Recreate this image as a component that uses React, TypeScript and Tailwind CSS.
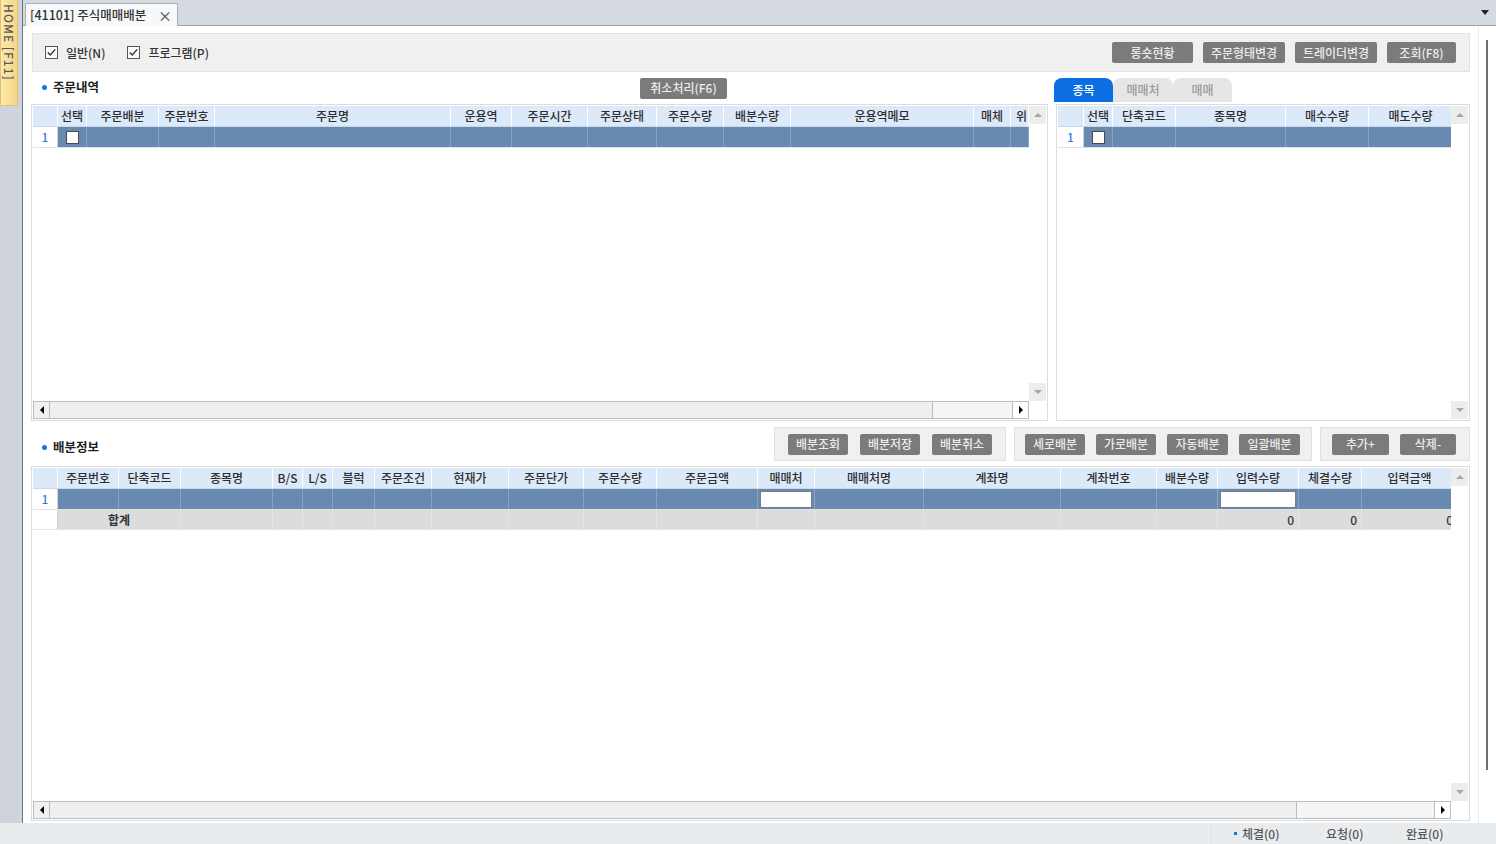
import React from 'react';

type Col = { w: string; label: string; kind?: 'check' | 'input'; left?: boolean };

const leftCols: Col[] = [
  { w: 'w-[29px]', label: '선택', kind: 'check' },
  { w: 'w-[72px]', label: '주문배분' },
  { w: 'w-[56px]', label: '주문번호' },
  { w: 'w-[236px]', label: '주문명' },
  { w: 'w-[61px]', label: '운용역' },
  { w: 'w-[76px]', label: '주문시간' },
  { w: 'w-[69px]', label: '주문상태' },
  { w: 'w-[67px]', label: '주문수량' },
  { w: 'w-[67px]', label: '배분수량' },
  { w: 'w-[183px]', label: '운용역메모' },
  { w: 'w-[37px]', label: '매체' },
  { w: 'w-[18px]', label: '위', left: true },
];

const rightCols: Col[] = [
  { w: 'w-[29px]', label: '선택', kind: 'check' },
  { w: 'w-[63px]', label: '단축코드' },
  { w: 'w-[110px]', label: '종목명' },
  { w: 'w-[83px]', label: '매수수량' },
  { w: 'w-[84px]', label: '매도수량' },
];

const bottomCols: Col[] = [
  { w: 'w-[61px]', label: '주문번호' },
  { w: 'w-[62px]', label: '단축코드' },
  { w: 'w-[92px]', label: '종목명' },
  { w: 'w-[30px]', label: 'B/S' },
  { w: 'w-[30px]', label: 'L/S' },
  { w: 'w-[42px]', label: '블럭' },
  { w: 'w-[57px]', label: '주문조건' },
  { w: 'w-[77px]', label: '현재가' },
  { w: 'w-[75px]', label: '주문단가' },
  { w: 'w-[73px]', label: '주문수량' },
  { w: 'w-[101px]', label: '주문금액' },
  { w: 'w-[57px]', label: '매매처', kind: 'input' },
  { w: 'w-[109px]', label: '매매처명' },
  { w: 'w-[137px]', label: '계좌명' },
  { w: 'w-[96px]', label: '계좌번호' },
  { w: 'w-[61px]', label: '배분수량' },
  { w: 'w-[81px]', label: '입력수량', kind: 'input' },
  { w: 'w-[63px]', label: '체결수량' },
  { w: 'w-[96px]', label: '입력금액' },
];

const zeroCols = ['입력수량', '체결수량', '입력금액'];

function Btn({ w, children }: { w: string; children: React.ReactNode }) {
  return (
    <div className={`${w} h-[21px] shrink-0 rounded-[2px] bg-[#7b7b7b] text-[#ececec] text-[12px] flex items-center justify-center whitespace-nowrap`}>
      {children}
    </div>
  );
}

function CheckBox() {
  return (
    <svg width="13" height="13" viewBox="0 0 13 13" className="shrink-0">
      <rect x="0.5" y="0.5" width="12" height="12" fill="#fafafa" stroke="#555" />
      <path d="M2.8 6.4 L5.3 9 L10.2 3.4" stroke="#333" strokeWidth="1.4" fill="none" />
    </svg>
  );
}

function Title({ children }: { children: React.ReactNode }) {
  return (
    <div className="flex items-center pl-[11px] gap-[6px]">
      <div className="w-[5px] h-[5px] rounded-full bg-[#1a72e6]" />
      <span className="text-[12.5px] font-bold text-[#222]">{children}</span>
    </div>
  );
}

function VScroll() {
  return (
    <div className="w-[17px] shrink-0 flex flex-col bg-white">
      <div className="h-[18px] bg-[#ededed] flex items-center justify-center">
        <div className="w-0 h-0 border-x-[4px] border-x-transparent border-b-[4px] border-b-[#a6a6a6]" />
      </div>
      <div className="flex-1" />
      <div className="h-[18px] bg-[#ededed] flex items-center justify-center">
        <div className="w-0 h-0 border-x-[4px] border-x-transparent border-t-[4px] border-t-[#a6a6a6]" />
      </div>
    </div>
  );
}

function HScroll({ thumb }: { thumb: string }) {
  return (
    <div className="h-[18px] shrink-0 flex">
      <div className="flex-1 flex border border-[#bdbdbd] bg-[#f5f5f5]">
        <div className="w-[16px] shrink-0 border-r border-[#bdbdbd] bg-[#f0f0f0] flex items-center justify-center">
          <div className="w-0 h-0 border-y-[4px] border-y-transparent border-r-[4px] border-r-black" />
        </div>
        <div className={`${thumb} shrink-0 border-r border-[#bdbdbd] bg-[#efefef]`} />
        <div className="flex-1" />
        <div className="w-[16px] shrink-0 border-l border-[#bdbdbd] bg-white flex items-center justify-center">
          <div className="w-0 h-0 border-y-[4px] border-y-transparent border-l-[4px] border-l-black" />
        </div>
      </div>
      <div className="w-[17px] shrink-0 bg-white" />
    </div>
  );
}

function Grid({
  rn,
  cols,
  thumb,
  sum,
}: {
  rn: string;
  cols: Col[];
  thumb?: string;
  sum?: React.ReactNode;
}) {
  return (
    <div className="h-full border border-[#dcdcdc] p-px flex flex-col bg-white">
      <div className="flex-1 min-h-0 flex">
        <div className="flex-1 min-w-0 overflow-hidden flex flex-col">
          <div className="flex h-[21px] shrink-0 bg-[#dce9f9] border-b border-[#c9d8eb]">
            <div className={`${rn} shrink-0 border-r border-white`} />
            {cols.map((c, i) => (
              <div
                key={i}
                className={`${c.w} shrink-0 border-r border-white text-[12px] text-[#2e2e2e] leading-[20px] overflow-hidden whitespace-nowrap ${c.left ? 'text-left pl-[5px]' : 'text-center'}`}
              >
                {c.label}
              </div>
            ))}
          </div>
          <div className="flex h-[21px] shrink-0 border-b border-[#e1e1e1]">
            <div className={`${rn} shrink-0 bg-white border-r border-[#d5d5d5] text-[12px] text-[#3b7bd8] text-center leading-[20px]`}>1</div>
            {cols.map((c, i) => (
              <div key={i} className={`${c.w} shrink-0 bg-[#6889b0] border-r border-[#8aa3c2] flex items-center justify-center`}>
                {c.kind === 'check' && <div className="w-[13px] h-[13px] bg-white border border-[#4a4a4a]" />}
                {c.kind === 'input' && <div className="flex-1 mx-[2px] h-[17px] bg-white border border-[#7d7d7d]" />}
              </div>
            ))}
          </div>
          {sum}
        </div>
        <VScroll />
      </div>
      {thumb && <HScroll thumb={thumb} />}
    </div>
  );
}

export default function App() {
  const sumRow = (
    <div className="flex h-[20px] shrink-0 border-b border-[#e6e6e6]">
      <div className="w-[25px] shrink-0 bg-white border-r border-[#d5d5d5]" />
      <div className="w-[123px] shrink-0 bg-[#dcdcdc] border-r border-[#e6e6e6] text-center font-bold text-[12px] text-[#333] leading-[19px]">합계</div>
      {bottomCols.slice(2).map((c, i) => (
        <div key={i} className={`${c.w} shrink-0 bg-[#dcdcdc] border-r border-[#e6e6e6] text-right pr-[4px] text-[12px] text-[#333] leading-[19px]`}>
          {zeroCols.includes(c.label) ? '0' : ''}
        </div>
      ))}
    </div>
  );

  return (
    <div className="w-[1496px] h-[844px] overflow-hidden flex flex-col bg-[#e9ecef] font-['Noto_Sans_CJK_KR','Noto_Sans',sans-serif] font-medium text-[12px] text-[#333]">
      <div className="flex-1 min-h-0 flex">
        {/* left strip */}
        <div className="w-[22px] shrink-0 bg-[#cfd4dc] flex flex-col">
          <div className="w-[18px] h-[106px] bg-gradient-to-r from-[#fde9ad] to-[#f6d686] border border-t-0 border-[#e2c26e] flex justify-center pt-[4px]">
            <span className="[writing-mode:vertical-rl] text-[12px] leading-[16px] text-[#5a5a5a] tracking-[1px]">HOME [F11]</span>
          </div>
        </div>

        {/* main column */}
        <div className="flex-1 min-w-0 flex flex-col border-l border-[#6e737a]">
          {/* tab bar */}
          <div className="h-[26px] shrink-0 bg-[#d5dae1] border-b border-[#9aa1aa] flex items-end pl-[2px] pr-[7px]">
            <div className="h-[23px] w-[153px] -mb-px bg-[#f7f8fa] border border-b-0 border-[#a9b0b9] flex items-center justify-between pl-[4px] pr-[5px]">
              <span className="text-[12.5px] text-[#333] whitespace-nowrap">[41101] 주식매매배분</span>
              <span className="text-[14px] leading-[14px] text-[#555]">×</span>
            </div>
            <div className="flex-1" />
            <div className="self-center w-0 h-0 border-x-[4px] border-x-transparent border-t-[5px] border-t-[#222]" />
          </div>

          {/* content */}
          <div className="flex-1 min-h-0 flex bg-white">
            <div className="flex-1 min-w-0 flex flex-col pl-[8px] pt-[7px]">
              {/* toolbar */}
              <div className="h-[39px] shrink-0 ml-px bg-[#f0f0f0] border border-[#e2e2e2] flex items-center pl-[12px] pr-[13px]">
                <div className="flex items-center gap-[8px]">
                  <CheckBox />
                  <span className="text-[12px] text-[#333]">일반(N)</span>
                </div>
                <div className="flex items-center gap-[8px] ml-[22px]">
                  <CheckBox />
                  <span className="text-[12px] text-[#333]">프로그램(P)</span>
                </div>
                <div className="flex-1" />
                <div className="flex items-center gap-[10px]">
                  <Btn w="w-[81px]">롱숏현황</Btn>
                  <Btn w="w-[82px]">주문형태변경</Btn>
                  <Btn w="w-[82px]">트레이더변경</Btn>
                  <Btn w="w-[69px]">조회(F8)</Btn>
                </div>
              </div>

              {/* middle row */}
              <div className="h-[349px] shrink-0 flex gap-[5px]">
                <div className="w-[1017px] shrink-0 flex flex-col">
                  <div className="h-[32px] shrink-0 flex items-center">
                    <div className="w-[609px] shrink-0 -mt-px">
                      <Title>주문내역</Title>
                    </div>
                    <Btn w="w-[87px]">취소처리(F6)</Btn>
                  </div>
                  <div className="flex-1 min-h-0">
                    <Grid rn="w-[25px]" cols={leftCols} thumb="w-[883px]" />
                  </div>
                </div>

                <div className="w-[417px] shrink-0 flex flex-col">
                  <div className="h-[30px] shrink-0 pt-[6px] pl-px flex items-end">
                    <div className="w-[59px] h-[24px] rounded-t-[8px] bg-[#0b6fe3] text-white text-[12px] flex items-center justify-center">종목</div>
                    <div className="w-[60px] h-[24px] rounded-t-[8px] bg-[#e6e6e6] text-[#9a9a9a] text-[12px] flex items-center justify-center">매매처</div>
                    <div className="w-[59px] h-[24px] rounded-t-[8px] bg-[#e6e6e6] text-[#9a9a9a] text-[12px] flex items-center justify-center">매매</div>
                  </div>
                  <div className="flex-1 min-h-0 pt-[2px] pl-[3px]">
                    <Grid rn="w-[26px]" cols={rightCols} />
                  </div>
                </div>
              </div>

              {/* bottom header */}
              <div className="h-[45px] shrink-0 flex items-start pt-[6px]">
                <div className="flex-1 mt-[11px]">
                  <Title>배분정보</Title>
                </div>
                <div className="flex gap-[8px]">
                  <div className="w-[232px] h-[34px] bg-[#f0f0f0] border border-[#e2e2e2] flex items-center pl-[13px] gap-[12px]">
                    <Btn w="w-[60px]">배분조회</Btn>
                    <Btn w="w-[60px]">배분저장</Btn>
                    <Btn w="w-[60px]">배분취소</Btn>
                  </div>
                  <div className="w-[298px] h-[34px] bg-[#f0f0f0] border border-[#e2e2e2] flex items-center pl-[10px] gap-[11px]">
                    <Btn w="w-[60px]">세로배분</Btn>
                    <Btn w="w-[60px]">가로배분</Btn>
                    <Btn w="w-[61px]">자동배분</Btn>
                    <Btn w="w-[61px]">일괄배분</Btn>
                  </div>
                  <div className="w-[150px] h-[34px] bg-[#f0f0f0] border border-[#e2e2e2] flex items-center pl-[11px] gap-[11px]">
                    <Btn w="w-[57px]">추가+</Btn>
                    <Btn w="w-[56px]">삭제-</Btn>
                  </div>
                </div>
              </div>

              {/* bottom grid */}
              <div className="h-[355px] shrink-0">
                <Grid rn="w-[25px]" cols={bottomCols} thumb="w-[1247px]" sum={sumRow} />
              </div>
            </div>

            {/* outer gutter */}
            <div className="w-[26px] shrink-0 flex pl-[8px]">
              <div className="w-px h-full bg-[#ececec]" />
              <div className="ml-[7px] mt-[14px] w-[2px] h-[730px] bg-[#6f6f6f]" />
            </div>
          </div>
        </div>
      </div>

      {/* status bar */}
      <div className="h-[21px] shrink-0 flex">
        <div className="w-[1211px] shrink-0" />
        <div className="flex-1 flex items-center border-l border-[#dde0e5] pl-[22px] text-[12px] text-[#555]">
          <div className="w-[85px] flex items-center gap-[5px]">
            <div className="w-[3px] h-[3px] bg-[#1a72e6]" />
            <span>체결(0)</span>
          </div>
          <div className="w-[80px] flex items-center gap-[4px]">
            <div className="w-[3px] h-[3px] bg-[#f2dfcd]" />
            <span>요청(0)</span>
          </div>
          <div className="flex items-center gap-[4px]">
            <div className="w-[3px] h-[3px] bg-[#f2dfcd]" />
            <span>완료(0)</span>
          </div>
        </div>
      </div>
    </div>
  );
}
